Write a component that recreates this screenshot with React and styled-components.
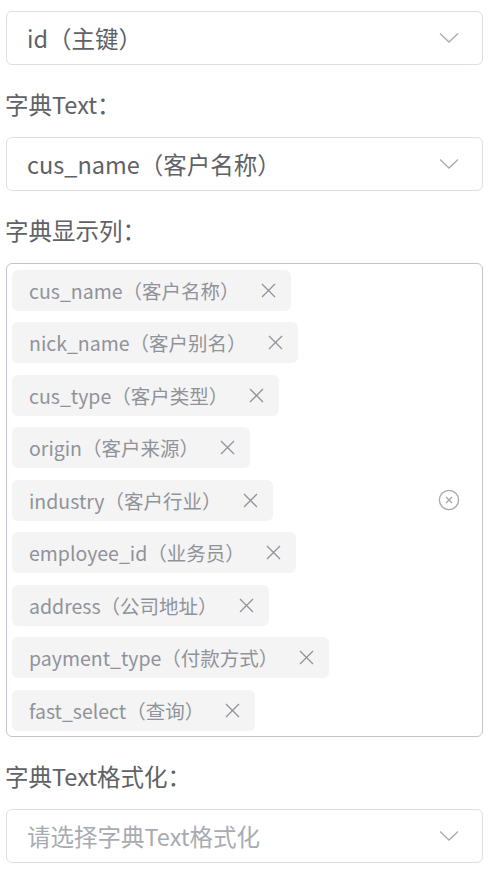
import React from 'react'
import styled, { createGlobalStyle } from 'styled-components';

const GlobalStyle = createGlobalStyle`
  body {
    margin: 0;
    background: #ffffff;
    font-family: "Noto Sans CJK SC", "Noto Sans", sans-serif;
  }
`;

const columns = [
  'cus_name（客户名称）',
  'nick_name（客户别名）',
  'cus_type（客户类型）',
  'origin（客户来源）',
  'industry（客户行业）',
  'employee_id（业务员）',
  'address（公司地址）',
  'payment_type（付款方式）',
  'fast_select（查询）',
];

const Chevron = () => (
  <svg width="20" height="12" viewBox="0 0 20 12" fill="none">
    <path d="M1 1.5 L10 10 L19 1.5" stroke="#a8abb2" strokeWidth="1.3" />
  </svg>
);

const CloseX = () => (
  <svg width="15" height="15" viewBox="0 0 15 15" fill="none">
    <path d="M1 1 L14 14 M14 1 L1 14" stroke="#909399" strokeWidth="1.3" />
  </svg>
);

const ClearIcon = () => (
  <svg width="22" height="22" viewBox="0 0 22 22" fill="none">
    <circle cx="11" cy="11" r="9.6" stroke="#a8abb2" strokeWidth="1.4" />
    <path d="M8 8 L14 14 M14 8 L8 14" stroke="#a8abb2" strokeWidth="1.4" />
  </svg>
);

const App = () => {
  return (
    <>
      <GlobalStyle />
      <Form>
        <Select>
          <Value>id（主键）</Value>
          <Chevron />
        </Select>

        <Label>字典Text：</Label>
        <Select>
          <Value>cus_name（客户名称）</Value>
          <Chevron />
        </Select>

        <Label>字典显示列：</Label>
        <MultiSelect>
          <Tags>
            {columns.map((c) => (
              <Tag key={c}>
                <span>{c}</span>
                <CloseX />
              </Tag>
            ))}
          </Tags>
          <Clear>
            <ClearIcon />
          </Clear>
        </MultiSelect>

        <Label>字典Text格式化：</Label>
        <Select>
          <Value $placeholder>请选择字典Text格式化</Value>
          <Chevron />
        </Select>
      </Form>
    </>
  )
}

export default App;

const Form = styled.div`
  width: 477px;
  padding: 11px 0 0 6px;
  display: flex;
  flex-direction: column;
`

const Select = styled.div`
  box-sizing: border-box;
  height: 54px;
  border: 1.5px solid #dcdfe6;
  border-radius: 6px;
  display: flex;
  align-items: center;
  justify-content: space-between;
  padding: 0 23px 0 20px;
  background: #fff;
`

const Value = styled.span`
  font-size: 23.5px;
  color: ${(p) => (p.$placeholder ? '#a8abb2' : '#606266')};
`

const Label = styled.div`
  margin: 19px 0 13px -1px;
  height: 40px;
  line-height: 40px;
  font-size: 23.5px;
  color: #606266;
`

const MultiSelect = styled.div`
  position: relative;
  box-sizing: border-box;
  border: 1.5px solid #c0c4cc;
  border-radius: 6px;
  padding: 5.5px 60px 5.5px 5px;
`

const Tags = styled.div`
  display: flex;
  flex-wrap: wrap;
  flex-direction: column;
  align-items: flex-start;
  gap: 11.5px;
`

const Tag = styled.div`
  height: 41px;
  display: inline-flex;
  align-items: center;
  gap: 21px;
  padding: 0 15px 0 17px;
  border-radius: 6px;
  background: #f4f4f5;
  color: #909399;
  font-size: 19.5px;
  svg { flex: none; }
`

const Clear = styled.div`
  position: absolute;
  right: 22px;
  top: 50%;
  transform: translateY(-50%);
  display: flex;
`
